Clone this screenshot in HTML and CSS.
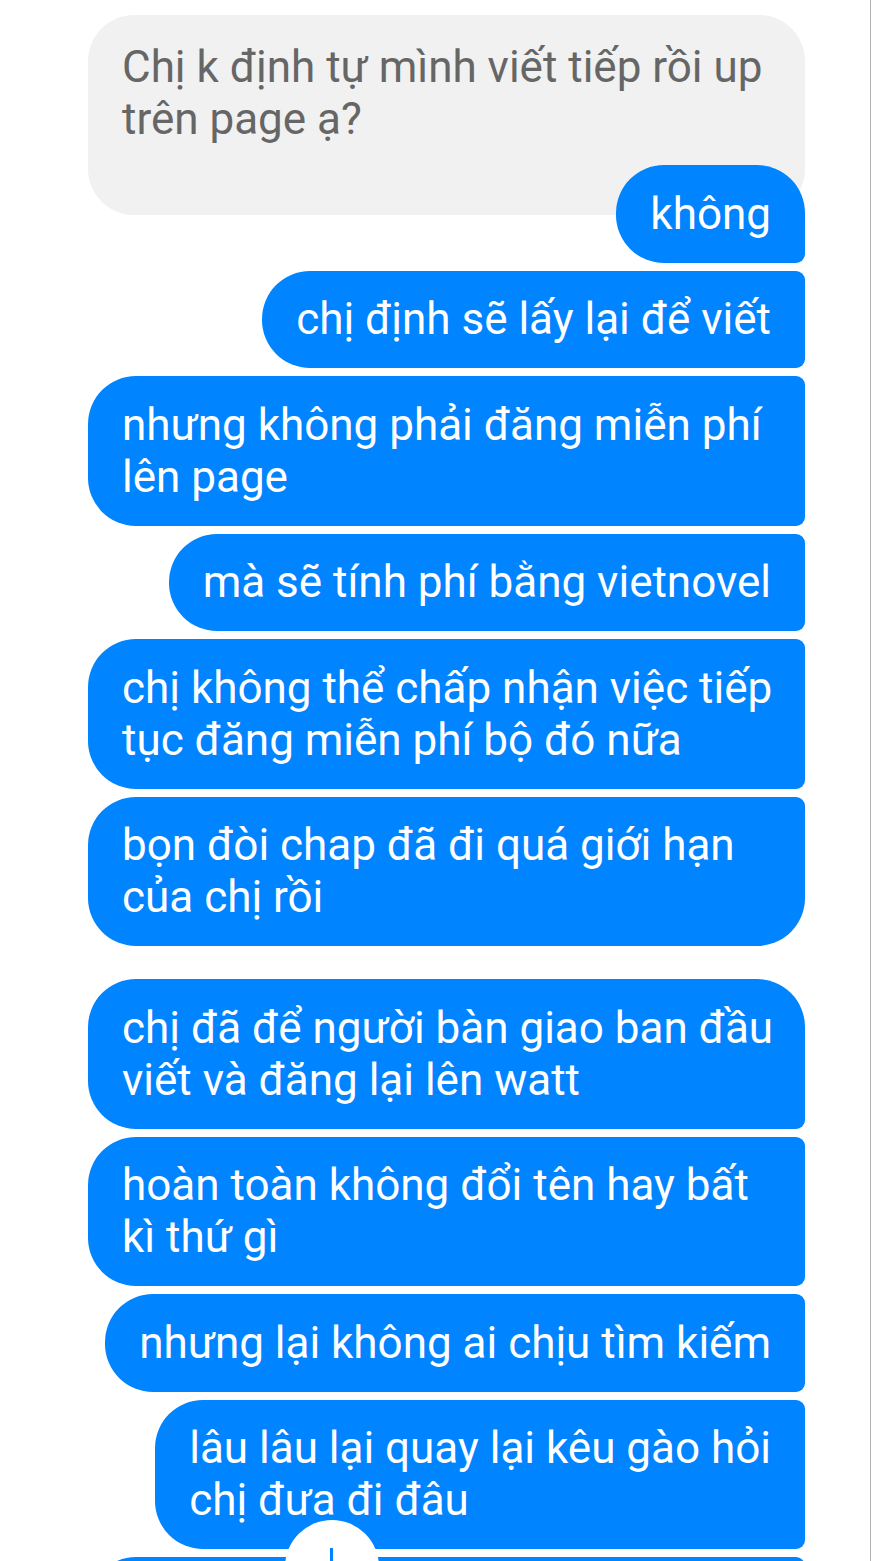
FILE: index.html
```html
<!DOCTYPE html>
<html lang="vi">
<head>
<meta charset="utf-8">
<title>Chat</title>
<link rel="stylesheet" href="styles.css">
</head>
<body>
<div class="chat">
  <div class="bubble in">Chị k định tự mình viết tiếp rồi up<br>trên page ạ?</div>
  <div class="bubble out first overlap">không</div>
  <div class="bubble out mid">chị định sẽ lấy lại để viết</div>
  <div class="bubble out mid full">nhưng không phải đăng miễn phí<br>lên page</div>
  <div class="bubble out mid">mà sẽ tính phí bằng vietnovel</div>
  <div class="bubble out mid full">chị không thể chấp nhận việc tiếp<br>tục đăng miễn phí bộ đó nữa</div>
  <div class="bubble out last full">bọn đòi chap đã đi quá giới hạn<br>của chị rồi</div>
  <div class="bubble out first full newgroup">chị đã để người bàn giao ban đầu<br>viết và đăng lại lên watt</div>
  <div class="bubble out mid full">hoàn toàn không đổi tên hay bất<br>kì thứ gì</div>
  <div class="bubble out mid">nhưng lại không ai chịu tìm kiếm</div>
  <div class="bubble out mid">lâu lâu lại quay lại kêu gào hỏi<br>chị đưa đi đâu</div>
  <div class="bubble out mid full">&nbsp;<br>&nbsp;</div>
  <div class="scroll-btn"><span class="scroll-arrow"></span></div>
</div>
</body>
</html>
```
FILE: styles.css
```css
html, body {
  margin: 0;
  padding: 0;
  background: #ffffff;
}

body {
  overflow: hidden;
  height: 1561px;
}

.chat {
  position: relative;
  width: 871px;
  height: 1561px;
  box-sizing: border-box;
  border-right: 1px solid #b3b3b3;
  padding: 15px 65px 0 88px;
  display: flex;
  flex-direction: column;
  align-items: flex-end;
  gap: 8px;
  overflow: hidden;
  font-family: Roboto, "Noto Sans", sans-serif;
  font-size: 44px;
  line-height: 52px;
}

.bubble {
  box-sizing: border-box;
  max-width: 717px;
  padding: 22.75px 34px;
  white-space: nowrap;
  flex: none;
}

.bubble.in {
  align-self: stretch;
  background: #f1f1f1;
  color: #666666;
  padding: 26px 34px 70px;
  border-radius: 46px;
}

.bubble.out {
  background: #0084ff;
  color: #ffffff;
}

.bubble.full {
  align-self: stretch;
}

.bubble.first {
  border-radius: 48px 48px 9px 48px;
}

.bubble.mid {
  border-radius: 48px 9px 9px 48px;
}

.bubble.last {
  border-radius: 48px 9px 48px 48px;
}

.bubble.overlap {
  margin-top: -58px;
  position: relative;
}

.bubble.newgroup {
  margin-top: 25px;
}

.scroll-btn {
  position: absolute;
  left: 285px;
  top: 1520px;
  width: 94px;
  height: 94px;
  border-radius: 50%;
  background: #ffffff;
}

.scroll-arrow {
  position: absolute;
  left: 45px;
  top: 28px;
  width: 3px;
  height: 40px;
  background: #0084ff;
}
```
